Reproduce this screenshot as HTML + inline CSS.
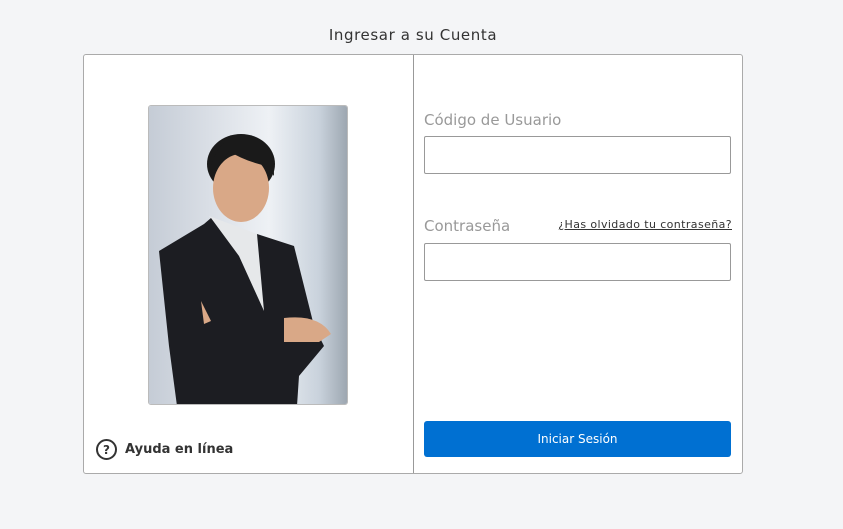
<!DOCTYPE html>
<html><head><meta charset="utf-8"><style>
body{margin:0;width:843px;height:529px;background:#f4f5f7;font-family:"DejaVu Sans","Liberation Sans",sans-serif;position:relative;overflow:hidden}
.t{position:absolute;top:26px;left:0;width:826px;text-align:center;font-size:15px;color:#333;letter-spacing:0.6px}
.card{position:absolute;left:83px;top:54px;width:658px;height:418px;background:#fff;border:1px solid #aaa;border-radius:3px}
.div{position:absolute;left:329px;top:0;width:1px;height:418px;background:#999}
.photo{position:absolute;left:64px;top:50px;width:200px;height:300px;border-radius:3px;overflow:hidden;border:1px solid #bbb;box-sizing:border-box}
.help{position:absolute;left:12px;top:384px;display:flex;align-items:center;font-size:13px;font-weight:bold;color:#333}
.help .q{width:17px;height:17px;border:2px solid #333;border-radius:50%;font-size:12px;display:flex;align-items:center;justify-content:center;margin-right:8px}
.lab{position:absolute;left:340px;font-size:15px;color:#999}
.inp{position:absolute;left:340px;width:305px;height:36px;border:1px solid #999;border-radius:2px}
.fg{position:absolute;right:10px;top:163px;font-size:11px;color:#333;text-decoration:underline;letter-spacing:0.4px}
.btn{position:absolute;left:340px;top:366px;width:307px;height:36px;background:#0070d2;border-radius:3px;color:#fff;font-size:12px;display:flex;align-items:center;justify-content:center}
</style></head><body>
<div class="t">Ingresar a su Cuenta</div>
<div class="card">
<div class="photo"><svg width="200" height="300" viewBox="0 0 200 300">
<defs><linearGradient id="g" x1="0" x2="1"><stop offset="0" stop-color="#c5ccd6"/><stop offset=".6" stop-color="#eef1f5"/><stop offset=".85" stop-color="#c9d2dc"/><stop offset="1" stop-color="#9aa4ae"/></linearGradient></defs>
<rect width="200" height="300" fill="url(#g)"/>
<ellipse cx="92" cy="58" rx="34" ry="30" fill="#1a1a1a"/>
<ellipse cx="92" cy="82" rx="28" ry="34" fill="#d9a887"/>
<path d="M62 60 Q70 30 95 32 Q125 34 125 70 L118 60 Q95 55 80 45 Q70 60 62 70Z" fill="#1a1a1a"/>
<path d="M60 110 L108 128 L115 205 L88 150Z" fill="#e6e8ea"/>
<path d="M10 145 L55 118 L62 112 L90 150 L115 205 L108 128 L145 140 L165 220 L175 240 L150 270 L148 300 L28 300 L20 240Z" fill="#1c1d22"/>
<path d="M135 212 Q170 208 182 228 L170 236 L135 236Z" fill="#d9a887"/>
<path d="M52 195 L62 215 L55 218Z" fill="#d9a887"/>
</svg></div>
<div class="help"><span class="q">?</span>Ayuda en línea</div>
<div class="div"></div>
<div class="lab" style="top:56px">Código de Usuario</div>
<div class="inp" style="top:81px"></div>
<div class="lab" style="top:162px">Contraseña</div>
<div class="fg">¿Has olvidado tu contraseña?</div>
<div class="inp" style="top:188px"></div>
<div class="btn">Iniciar Sesión</div>
</div>
</body></html>
